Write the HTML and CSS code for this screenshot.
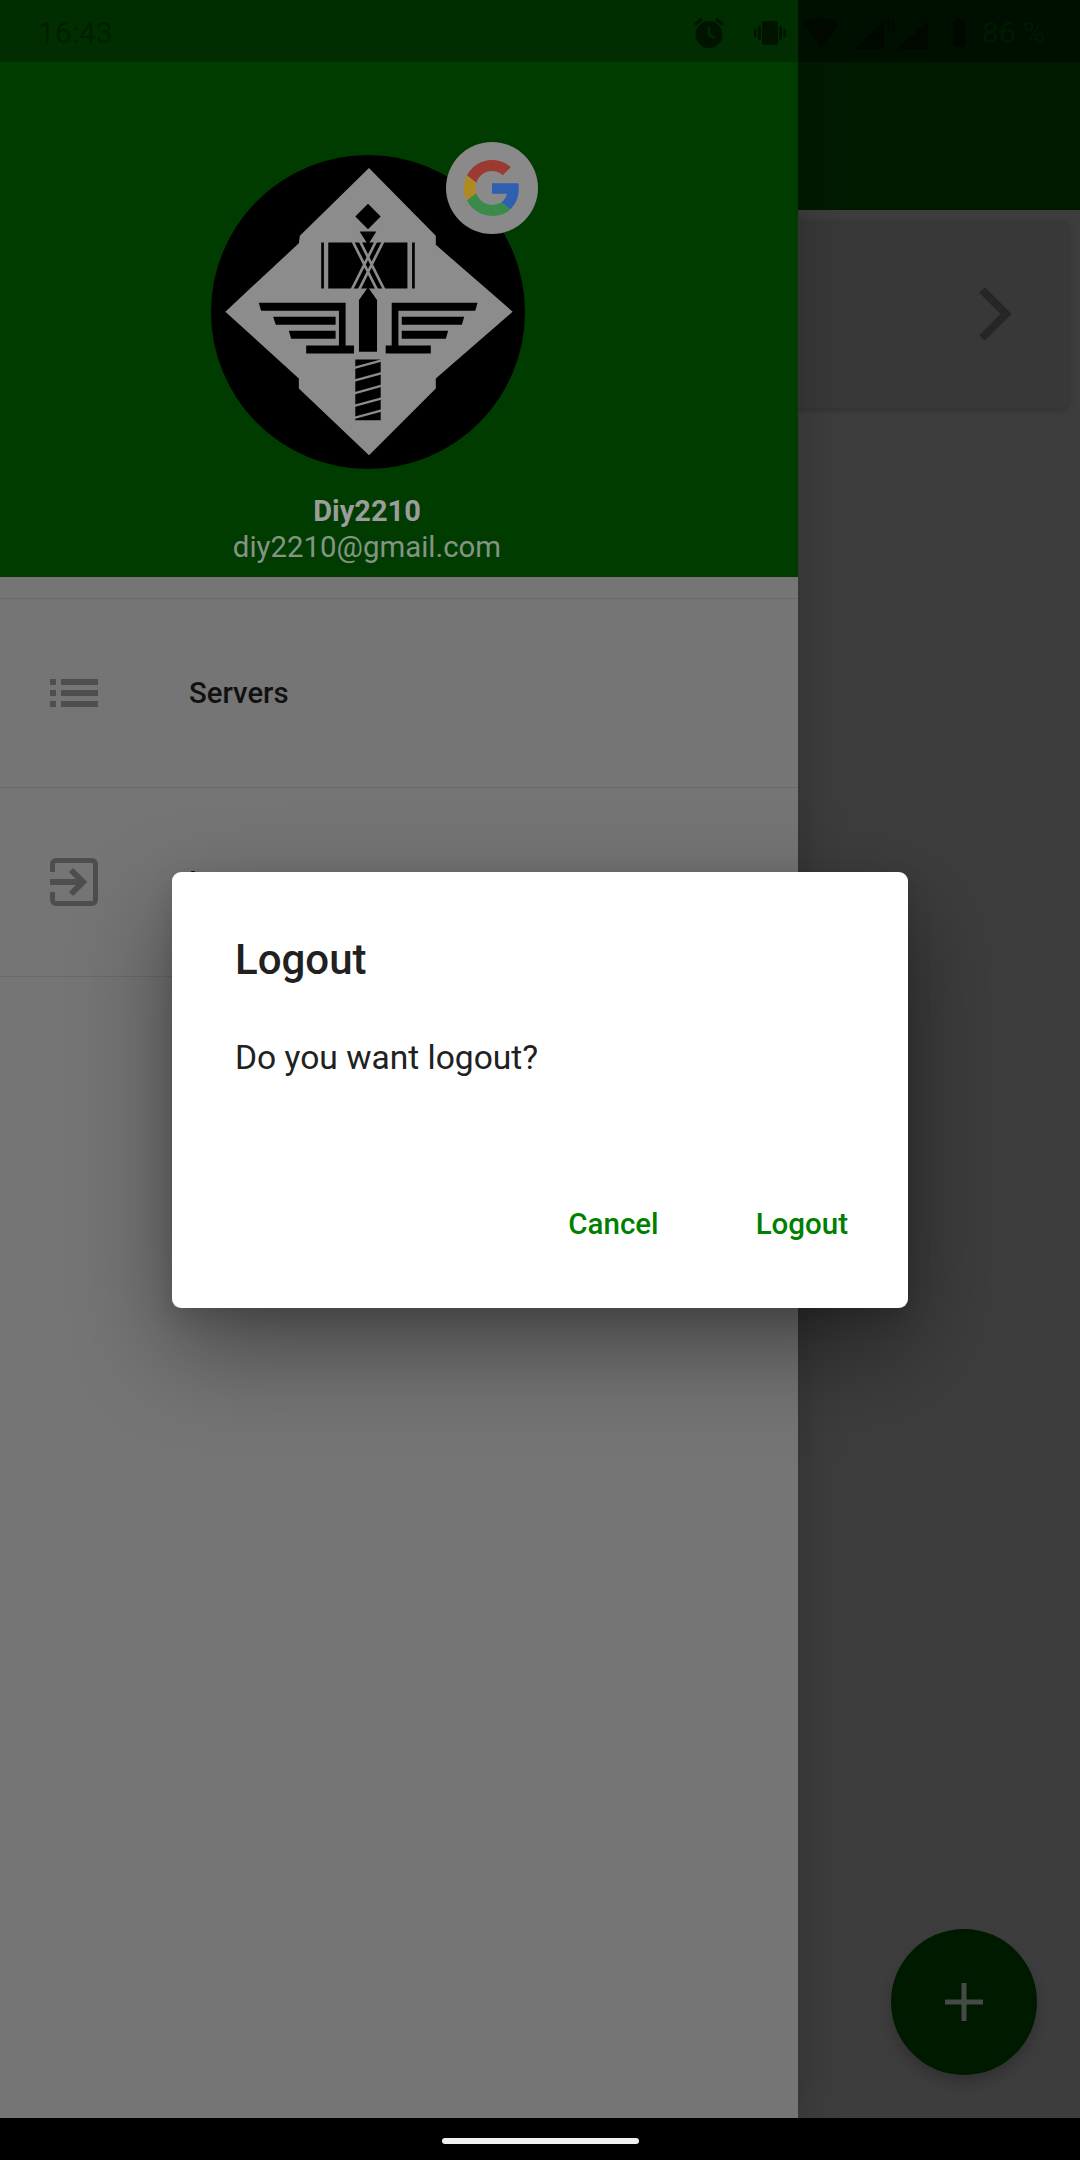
FILE: index.html
```html
<!DOCTYPE html>
<html lang="en">
<head>
    <meta charset="UTF-8">
    <meta name="viewport" content="width=device-width, initial-scale=1.0">
    <title>Logout</title>
    <link rel="stylesheet" href="styles.css">
</head>
<body>
    <div class="screen">
        <div class="main">
            <div class="page">
                <div class="status-bar">
                    <span class="time">16:43</span>
                    <div class="status-icons">
                        <svg class="s-icon on-drawer alarm" width="36" height="36" viewBox="0 0 24 24"><path d="M22 5.700l-4.600-3.900-1.300 1.500 4.600 3.900L22 5.700zM7.900 3.400L6.600 1.900 2 5.700l1.300 1.500 4.600-3.800zM12 4c-5 0-9 4-9 9s4 9 9 9 9-4 9-9-4-9-9-9z"/><path d="M12 8v5.300l3.600 2.200" fill="none" stroke="#002e00" stroke-width="1.300"/></svg>
                        <svg class="s-icon on-drawer vibrate" width="36" height="32" viewBox="0 0 24 24"><path d="M0 15h2V9H0v6zm3 2h2V7H3v10zm19-8v6h2V9h-2zm-3 8h2V7h-2v10zM16.500 3h-9C6.700 3 6 3.700 6 4.500v15c0 .8.700 1.500 1.500 1.500h9c.8 0 1.500-.7 1.500-1.500v-15c0-.8-.7-1.500-1.500-1.500z"/></svg>
                        <svg class="s-icon wifi" width="36" height="30" viewBox="0 0 24 20"><path d="M12 20L24 4C23.500 3.600 18.900 0 12 0S.5 3.600 0 4l12 16z"/></svg>
                        <svg class="s-icon" width="44" height="32" viewBox="0 0 44 32"><path d="M0 32L30 4v28z"/><path d="M35 14V2l-3 4M39 2v12l3-4" fill="none" stroke="#000800" stroke-width="2"/></svg>
                        <svg class="s-icon" width="44" height="32" viewBox="0 0 44 32"><path d="M0 32L30 4v28z"/></svg>
                        <svg class="s-icon level" width="20" height="30" viewBox="0 0 14 24"><path d="M10 3H9V1H5v2H4C3 3 2 3.800 2 5v16c0 1 1 2 2 2h6c1 0 2-1 2-2V5c0-1.200-1-2-2-2z"/></svg>
                        <span class="battery">86 %</span>
                    </div>
                </div>
                <div class="app-bar"></div>
                <div class="body">
                    <div class="card">
                        <svg width="36" height="56" viewBox="0 0 36 56"><path d="M5 4l24 24L5 52" fill="none" stroke="#262626" stroke-width="8"/></svg>
                    </div>
                </div>
            </div>

            <div class="fab">
                <svg width="38" height="38" viewBox="0 0 38 38"><path d="M19 0v38M0 19h38" stroke="#464a46" stroke-width="5"/></svg>
            </div>

            <div class="drawer">
                <div class="drawer-status"></div>
                <div class="drawer-header">
                    <div class="avatar">
                        <svg width="314" height="314" viewBox="62 76 940 940">
                            <circle cx="532" cy="546" r="470" fill="#000"/>
                            <path fill="#8c8c8c" d="M535 115L735 318V345L965 545 735 745V775L535 975 325 775V745L105 545 325 340 328 318z"/>
                            <!-- top diamond -->
                            <path fill="#000" d="M532 222l38 38-38 38-38-38z"/>
                            <!-- hammer head -->
                            <path fill="#000" d="M413 338h237v138H413zM392 338h8v138h-8zM664 338h8v138h-8z"/>
                            <path fill="#000" d="M507 305h50l-25 40z"/>
                            <path fill="none" stroke="#8c8c8c" stroke-width="8" d="M478 318l90 180M497 312l90 180M586 318l-90 180M567 312l-90 180"/>
                            <!-- handle -->
                            <path fill="#000" d="M505 510l27-38 27 38v155h-54z"/>
                            <!-- wings -->
                            <path fill="#000" d="M205 518h260v132h-20v-108H212zM248 560h187v24H256zM295 602h140v24H302zM347 646h143v24H347z"/>
                            <path fill="#000" d="M860 518H603v132h20V542h230zM820 560H633v24h180zM772 602H633v24h132zM720 646H585v24h135z"/>
                            <!-- screw -->
                            <path fill="#000" d="M494 688h76v182h-76z"/>
                            <path fill="none" stroke="#8c8c8c" stroke-width="7" d="M488 714l88-24M488 752l88-24M488 790l88-24M488 828l88-24M488 864l88-24"/>
                        </svg>
                        <div class="badge">
                            <svg width="56" height="56" viewBox="0 0 48 48">
                                <path fill="#9a3a30" d="M24 9.500c3.500 0 6.700 1.200 9.200 3.600l6.900-6.900C35.900 2.400 30.500 0 24 0 14.600 0 6.500 5.400 2.600 13.200l8 6.200C12.400 13.700 17.700 9.500 24 9.500z"/>
                                <path fill="#2f5fb0" d="M47 24.500c0-1.600-.1-3.100-.4-4.500H24v9h12.900c-.6 3-2.300 5.500-4.800 7.200l7.700 6C44.300 38 47 31.800 47 24.500z"/>
                                <path fill="#b08a20" d="M10.500 28.600c-.5-1.400-.8-3-.8-4.600s.3-3.200.8-4.600l-8-6.200C.9 16.500 0 20.100 0 24s.9 7.500 2.600 10.800l7.900-6.200z"/>
                                <path fill="#3a8a4a" d="M24 48c6.500 0 11.900-2.100 15.900-5.800l-7.700-6c-2.200 1.400-5 2.300-8.200 2.300-6.300 0-11.600-4.200-13.500-9.900l-8 6.200C6.500 42.600 14.600 48 24 48z"/>
                            </svg>
                        </div>
                    </div>
                    <div class="user-name">Diy2210</div>
                    <div class="user-email">diy2210@gmail.com</div>
                </div>
                <div class="drawer-list">
                    <div class="drawer-item">
                        <svg class="item-icon" width="48" height="28" viewBox="0 0 48 28"><path fill="#4e4e4e" d="M0 0h6v6H0zM11 0h37v6H11zM0 11h6v6H0zM11 11h37v6H11zM0 22h6v6H0zM11 22h37v6H11z"/></svg>
                        <span>Servers</span>
                    </div>
                    <div class="drawer-item">
                        <svg class="item-icon" width="48" height="48" viewBox="0 0 48 48"><path fill="none" stroke="#4e4e4e" stroke-width="5" d="M2.500 14V6a3.500 3.500 0 0 1 3.500-3.500h36a3.500 3.500 0 0 1 3.500 3.500v36a3.500 3.500 0 0 1-3.500 3.500H6A3.500 3.500 0 0 1 2.500 42v-8"/><path fill="none" stroke="#4e4e4e" stroke-width="6" d="M0 24h32M21 12l12 12-12 12"/></svg>
                        <span>Logout</span>
                    </div>
                </div>
            </div>

            <div class="dialog">
                <h2>Logout</h2>
                <p>Do you want logout?</p>
                <div class="dialog-actions">
                    <button>Cancel</button>
                    <button>Logout</button>
                </div>
            </div>
        </div>
        <div class="nav-bar"><div class="nav-handle"></div></div>
    </div>
</body>
</html>
```

FILE: styles.css
```css
body {
    margin: 0;
    font-family: Roboto, sans-serif;
    background-color: #000;
}
.screen {
    width: 1080px;
    height: 2160px;
    display: flex;
    flex-direction: column;
    overflow: hidden;
}
.main {
    position: relative;
    flex: 1;
    overflow: hidden;
}
.page {
    height: 100%;
    display: flex;
    flex-direction: column;
    background-color: #3d3d3d;
}
.status-bar {
    height: 62px;
    flex-shrink: 0;
    box-sizing: border-box;
    display: flex;
    align-items: center;
    justify-content: space-between;
    padding: 3px 35px 0 38px;
    position: relative;
    z-index: 3;
    background: linear-gradient(to right, #002e00 798px, #001000 798px);
}
.time {
    color: #001f00;
    font-size: 30px;
}
.status-icons {
    display: flex;
    align-items: center;
}
.s-icon {
    fill: #000800;
}
.s-icon.on-drawer {
    fill: #001400;
}
.alarm {
    margin-right: 25px;
}
.vibrate {
    margin-right: 15px;
}
.wifi {
    margin-right: 15px;
}
.level {
    margin-left: 7px;
}
.battery {
    font-size: 30px;
    color: #001a00;
    margin-left: 13px;
}
.app-bar {
    height: 148px;
    flex-shrink: 0;
    background-color: #001a00;
}
.body {
    flex: 1;
    padding: 10px 11px 0 0;
}
.card {
    height: 188px;
    display: flex;
    align-items: center;
    justify-content: flex-end;
    padding-right: 56px;
    background-color: #383838;
    border-radius: 8px;
    box-shadow: 0 2px 6px rgba(0, 0, 0, 0.2);
}
.fab {
    position: absolute;
    left: 891px;
    top: 1929px;
    width: 146px;
    height: 146px;
    border-radius: 50%;
    display: flex;
    align-items: center;
    justify-content: center;
    background-color: #001a00;
    box-shadow: 0 8px 14px rgba(0, 0, 0, 0.2);
}
.drawer {
    position: absolute;
    left: 0;
    top: 0;
    bottom: 0;
    width: 798px;
    display: flex;
    flex-direction: column;
    background-color: #757575;
    box-shadow: 0 0 40px rgba(0, 0, 0, 0.22);
    z-index: 2;
}
.drawer-status {
    height: 62px;
    flex-shrink: 0;
}
.drawer-header {
    height: 515px;
    flex-shrink: 0;
    box-sizing: border-box;
    display: flex;
    flex-direction: column;
    align-items: center;
    padding: 93px 64px 0 0;
    background-color: #003c00;
}
.avatar {
    position: relative;
    width: 314px;
    height: 314px;
    margin-left: 1px;
}
.avatar > svg {
    display: block;
}
.badge {
    position: absolute;
    left: 235px;
    top: -13px;
    width: 92px;
    height: 92px;
    border-radius: 50%;
    display: flex;
    align-items: center;
    justify-content: center;
    background-color: #8a8a8a;
}
.user-name {
    margin-top: 24px;
    font-size: 29px;
    line-height: 36px;
    font-weight: 700;
    color: #9c9c9c;
}
.user-email {
    font-size: 29.4px;
    line-height: 36px;
    color: #849484;
}
.drawer-list {
    padding-top: 21px;
}
.drawer-item {
    height: 188px;
    display: flex;
    align-items: center;
    border-top: 1px solid #6a6a6a;
    font-size: 29.3px;
    font-weight: 500;
    color: #111;
}
.drawer-item:last-child {
    border-bottom: 1px solid #6a6a6a;
}
.item-icon {
    margin: 0 91px 0 50px;
    flex-shrink: 0;
}
.dialog {
    position: absolute;
    left: 172px;
    top: 872px;
    width: 736px;
    height: 436px;
    box-sizing: border-box;
    padding: 64px 60px 0 63px;
    display: flex;
    flex-direction: column;
    background-color: #fff;
    border-radius: 9px;
    box-shadow: 0 40px 100px rgba(0, 0, 0, 0.42), 0 10px 24px rgba(0, 0, 0, 0.12);
    z-index: 4;
}
.dialog h2 {
    margin: 0;
    font-size: 42px;
    line-height: 48px;
    font-weight: 500;
    color: #212121;
}
.dialog p {
    margin: 52px 0 0;
    font-size: 33.6px;
    line-height: 44px;
    color: #212121;
}
.dialog-actions {
    margin-top: auto;
    margin-bottom: 66px;
    display: flex;
    justify-content: flex-end;
    gap: 97px;
}
.dialog-actions button {
    padding: 0;
    border: none;
    background: none;
    font-family: Roboto, sans-serif;
    font-size: 29.5px;
    line-height: 36px;
    font-weight: 500;
    color: #008000;
}
.nav-bar {
    height: 42px;
    flex-shrink: 0;
    display: flex;
    justify-content: center;
    padding-top: 20px;
    box-sizing: border-box;
    background-color: #000;
}
.nav-handle {
    width: 197px;
    height: 6px;
    border-radius: 3px;
    background-color: #f0f0f0;
}
```
